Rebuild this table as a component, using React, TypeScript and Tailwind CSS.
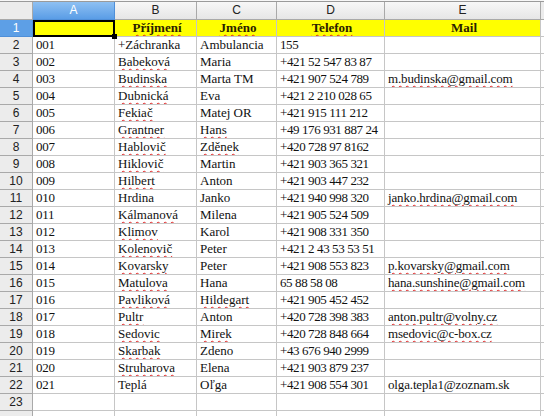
import React from "react";

type Row = {
  id: string;
  last: string;
  first: string;
  phone: string;
  mail?: string;
  lastErr?: boolean;
  firstErr?: boolean;
  mailErr?: boolean;
};

const rows: Row[] = [
  { id: "001", last: "+Záchranka", first: "Ambulancia", phone: "155" },
  { id: "002", last: "Babeková", first: "Maria", phone: "+421 52 547 83 87", lastErr: true },
  { id: "003", last: "Budinska", first: "Marta TM", phone: "+421 907 524 789", mail: "m.budinska@gmail.com", lastErr: true, mailErr: true },
  { id: "004", last: "Dubnická", first: "Eva", phone: "+421 2 210 028 65", lastErr: true },
  { id: "005", last: "Fekiač", first: "Matej OR", phone: "+421 915 111 212", lastErr: true },
  { id: "006", last: "Grantner", first: "Hans", phone: "+49 176 931 887 24", lastErr: true, firstErr: true },
  { id: "007", last: "Hablovič", first: "Zděnek", phone: "+420 728 97 8162", lastErr: true, firstErr: true },
  { id: "008", last: "Hiklovič", first: "Martin", phone: "+421 903 365 321", lastErr: true },
  { id: "009", last: "Hilbert", first: "Anton", phone: "+421 903 447 232", lastErr: true },
  { id: "010", last: "Hrdina", first: "Janko", phone: "+421 940 998 320", mail: "janko.hrdina@gmail.com", mailErr: true },
  { id: "011", last: "Kálmanová", first: "Milena", phone: "+421 905 524 509", lastErr: true },
  { id: "012", last: "Klimov", first: "Karol", phone: "+421 908 331 350", lastErr: true },
  { id: "013", last: "Kolenovič", first: "Peter", phone: "+421 2 43 53 53 51", lastErr: true },
  { id: "014", last: "Kovarsky", first: "Peter", phone: "+421 908 553 823", mail: "p.kovarsky@gmail.com", lastErr: true, mailErr: true },
  { id: "015", last: "Matulova", first: "Hana", phone: "65 88 58 08", mail: "hana.sunshine@gmail.com", lastErr: true, mailErr: true },
  { id: "016", last: "Pavliková", first: "Hildegart", phone: "+421 905 452 452", lastErr: true, firstErr: true },
  { id: "017", last: "Pultr", first: "Anton", phone: "+420 728 398 383", mail: "anton.pultr@volny.cz", lastErr: true, mailErr: true },
  { id: "018", last: "Sedovic", first: "Mirek", phone: "+420 728 848 664", mail: "msedovic@c-box.cz", lastErr: true, firstErr: true, mailErr: true },
  { id: "019", last: "Skarbak", first: "Zdeno", phone: "+43 676 940 2999", lastErr: true },
  { id: "020", last: "Struharova", first: "Elena", phone: "+421 903 879 237", lastErr: true },
  { id: "021", last: "Teplá", first: "Oľga", phone: "+421 908 554 301", mail: "olga.tepla1@zoznam.sk" },
];

const cols = "grid grid-cols-[33px_82px_82px_80px_108px_156px_3px]";
const cell = "h-[17px] border-r border-b border-[#c6c6c6] pl-[3px] leading-[16px] whitespace-nowrap overflow-hidden";
const err = "underline decoration-wavy decoration-[#e02020] decoration-1 underline-offset-2";

function RowHead({ n }: { n?: number }) {
  return (
    <div className="h-[17px] border-r border-b border-[#a9a9a9] bg-[#ececec] text-center text-[12px] leading-[16px] font-['Liberation_Sans',sans-serif] text-[#222]">
      {n}
    </div>
  );
}

function Txt({ text, bad }: { text?: string; bad?: boolean }) {
  if (!text) return null;
  return <span className={bad ? err : ""}>{text}</span>;
}

export default function App() {
  return (
    <div className="w-[544px] h-[416px] overflow-hidden bg-white font-['Liberation_Serif',serif] text-[13px] text-[#111]">
      <div className="h-[2px] bg-[#f7f7f7] border-b border-[#9a9a9a]" />
      <div className={cols}>
        <div className="h-[18px] border-r border-b border-[#a9a9a9] bg-[#ececec]" />
        <div className="h-[18px] border-r border-b border-[#4f8fd8] bg-gradient-to-b from-[#8ec0f2] to-[#5a9de6] text-center text-[12px] leading-[17px] font-['Liberation_Sans',sans-serif] text-white">
          A
        </div>
        {["B", "C", "D", "E"].map((c) => (
          <div
            key={c}
            className="h-[18px] border-r border-b border-[#a9a9a9] bg-gradient-to-b from-[#f7f7f7] to-[#e6e6e6] text-center text-[12px] leading-[17px] font-['Liberation_Sans',sans-serif] text-[#222]"
          >
            {c}
          </div>
        ))}
        <div className="h-[18px] border-b border-[#a9a9a9] bg-[#ececec]" />

        {/* row 1 */}
        <div className="h-[17px] border-r border-b border-[#4f8fd8] bg-[#5d9fe6] text-center text-[12px] leading-[16px] font-['Liberation_Sans',sans-serif] text-white">
          1
        </div>
        <div className="relative h-[17px] bg-[#ffff00] border-2 border-black">
          <div className="absolute -right-[4px] -bottom-[4px] w-[5px] h-[5px] bg-black" />
        </div>
        {[
          { t: "Příjmení", b: true },
          { t: "Jméno", b: true },
          { t: "Telefon", b: true },
          { t: "Mail", b: false },
        ].map((h) => (
          <div key={h.t} className={`${cell} bg-[#ffff00] text-center font-bold text-[#2a2000]`}>
            <Txt text={h.t} bad={h.b} />
          </div>
        ))}
        <div className="h-[17px] border-b border-[#c6c6c6]" />

        {rows.map((r, i) => (
          <React.Fragment key={r.id}>
            <RowHead n={i + 2} />
            <div className={`${cell} tracking-[-0.3px]`}>{r.id}</div>
            <div className={cell}>
              <Txt text={r.last} bad={r.lastErr} />
            </div>
            <div className={cell}>
              <Txt text={r.first} bad={r.firstErr} />
            </div>
            <div className={`${cell} tracking-[-0.4px]`}>{r.phone}</div>
            <div className={`${cell} tracking-[-0.15px]`}>
              <Txt text={r.mail} bad={r.mailErr} />
            </div>
            <div className="h-[17px] border-b border-[#c6c6c6]" />
          </React.Fragment>
        ))}

        <RowHead n={23} />
        {[0, 1, 2, 3, 4].map((k) => (
          <div key={k} className={cell} />
        ))}
        <div className="h-[17px] border-b border-[#c6c6c6]" />
        <RowHead />
        {[0, 1, 2, 3, 4].map((k) => (
          <div key={k} className={cell} />
        ))}
        <div className="h-[17px]" />
      </div>
    </div>
  );
}
